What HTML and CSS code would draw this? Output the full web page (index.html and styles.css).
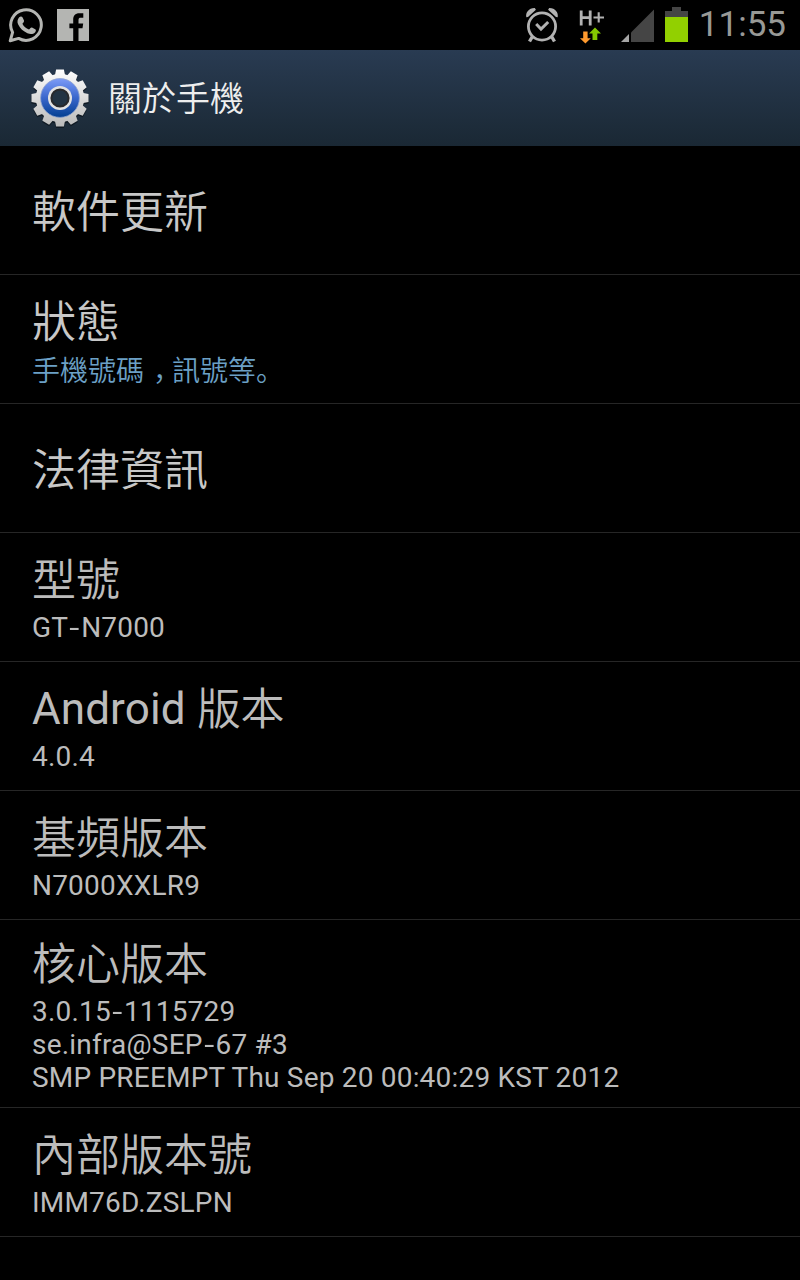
FILE: index.html
```html
<!DOCTYPE html>
<html lang="zh-Hant">
<head>
  <meta charset="UTF-8" />
  <meta name="viewport" content="width=device-width, initial-scale=1.0"/>
  <title>關於手機</title>
  <link rel="stylesheet" href="styles.css">
</head>
<body>

  <div class="status-bar">
    <svg class="icon-whatsapp" width="36" height="36" viewBox="0 0 36 36">
      <path d="M2.2 33.8 L4.6 25.4 A15.3 15.3 0 1 1 10.6 31.4 Z" fill="none" stroke="#b4b5b2" stroke-width="3" stroke-linejoin="round"/>
      <path d="M11.2 10.2 C12.3 9 14 9.2 14.6 10.4 L16 13.6 C16.4 14.8 15.2 15.8 14.4 16.8 C15.8 19.6 18 21.6 21 22.6 C22 21.6 22.8 20.2 24 20.6 L27.2 22.2 C28.3 22.8 28 24.4 27 25.4 C25 27.4 22.2 27.4 19.4 26.2 C15.4 24.6 12 21.4 10.2 17.6 C9 15 9.3 12.2 11.2 10.2 Z" fill="#b4b5b2"/>
    </svg>
    <svg class="icon-facebook" width="32" height="32" viewBox="0 0 32 32">
      <path d="M0 0 H32 V32 H21.5 V19.3 H25.5 L26.2 14.6 H21.5 V11 C21.5 9.4 22.2 8.8 23.8 8.8 H26.3 V4.3 H22.5 C18 4.3 16.2 6.8 16.2 10.6 V14.6 H12.4 V19.3 H16.2 V32 H0 Z" fill="#b4b5b2"/>
    </svg>

    <div class="status-right">
      <svg class="icon-alarm" width="34" height="36" viewBox="0 0 34 36">
        <g fill="none" stroke="#b2b2b2">
          <circle cx="17" cy="19.5" r="13.6" stroke-width="2.8"/>
          <path d="M11.2 17 L16 22 L23.2 15" stroke-width="3"/>
          <path d="M7.4 29.5 L4.5 34.5 M26.6 29.5 L29.5 34.5" stroke-width="3.4"/>
        </g>
        <path d="M1.3 10.3 C0.3 5.5 4 0.8 9.8 1 L10.9 2.7 L3 10 Z M32.7 10.3 C33.7 5.5 30 0.8 24.2 1 L23.1 2.7 L31 10 Z" fill="#b2b2b2"/>
      </svg>
      <svg class="icon-data" width="26" height="36" viewBox="0 0 26 36">
        <path d="M2.2 2.5 V17.5 M11.2 2.5 V17.5 M2 9.6 H11" fill="none" stroke="#b2b2b2" stroke-width="2.8"/>
        <path d="M14.5 9.5 H25 M19.7 4.3 V14.6" fill="none" stroke="#b2b2b2" stroke-width="2.1"/>
        <path d="M4.2 23.5 H8.6 V30.2 H11.8 L6.4 35.5 L1 30.2 H4.2 Z" fill="#ff9a2e"/>
        <path d="M13.5 32 H18.3 V25.6 H22 L16 19.5 L10 25.6 H13.5 Z" fill="#84c800"/>
      </svg>
      <svg class="icon-signal" width="34" height="33" viewBox="0 0 34 33">
        <path d="M10 23.5 L33 0.5 V33 H10 Z" fill="#454545"/>
        <path d="M0 33 L8 25 V33 Z" fill="#a5a5a5"/>
      </svg>
      <svg class="icon-battery" width="23" height="35" viewBox="0 0 23 35">
        <path d="M7 0 H16 V4 H23 V10 H0 V4 H7 Z" fill="#454545"/>
        <rect y="10" width="23" height="25" fill="#92d000"/>
      </svg>
      <span class="clock">11:55</span>
    </div>
  </div>

  <header>
    <svg class="icon-gear" width="60" height="62" viewBox="-30 -30 60 62">
      <defs>
        <linearGradient id="metal" gradientUnits="userSpaceOnUse" x1="0" y1="-29" x2="0" y2="29">
          <stop offset="0" stop-color="#ffffff"/>
          <stop offset="1" stop-color="#b9b9b9"/>
        </linearGradient>
        <linearGradient id="blue" x1="0" y1="0" x2="0" y2="1">
          <stop offset="0" stop-color="#7c9bf8"/>
          <stop offset="0.5" stop-color="#3966cb"/>
          <stop offset="1" stop-color="#033f91"/>
        </linearGradient>
        <path id="tooth" d="M-5.2 -22 L-3.9 -28.5 H3.9 L5.2 -22 Z"/>
        <g id="gear">
          <circle r="24.2"/>
          <use href="#tooth"/>
          <use href="#tooth" transform="rotate(30)"/>
          <use href="#tooth" transform="rotate(60)"/>
          <use href="#tooth" transform="rotate(90)"/>
          <use href="#tooth" transform="rotate(120)"/>
          <use href="#tooth" transform="rotate(150)"/>
          <use href="#tooth" transform="rotate(180)"/>
          <use href="#tooth" transform="rotate(210)"/>
          <use href="#tooth" transform="rotate(240)"/>
          <use href="#tooth" transform="rotate(270)"/>
          <use href="#tooth" transform="rotate(300)"/>
          <use href="#tooth" transform="rotate(330)"/>
        </g>
        <!-- teeth need one gradient across the whole gear, so they are used as a mask -->
        <mask id="gearMask" maskUnits="userSpaceOnUse" x="-30" y="-30" width="60" height="60">
          <use href="#gear" fill="#fff"/>
        </mask>
      </defs>
      <use class="gear-shadow" href="#gear" y="1.6"/>
      <rect x="-30" y="-30" width="60" height="60" fill="url(#metal)" mask="url(#gearMask)"/>
      <circle r="19.4" fill="url(#blue)" stroke="#8fa3cf" stroke-width="0.8"/>
      <circle r="12" fill="#e2e2e2"/>
      <circle r="8.6" fill="#223343" stroke="#28292c" stroke-width="2"/>
    </svg>
    <h1>關於手機</h1>
  </header>

  <ul class="settings">
    <li>
      <h2>軟件更新</h2>
    </li>
    <li>
      <h2>狀態</h2>
      <p class="link">手機號碼<span class="punct comma" lang="ja">，</span>訊號等<span class="punct" lang="ja">。</span></p>
    </li>
    <li>
      <h2>法律資訊</h2>
    </li>
    <li class="info">
      <h2>型號</h2>
      <p>GT<span class="dash">-</span>N7000</p>
    </li>
    <li class="info">
      <h2><span class="latin">Android </span>版本</h2>
      <p>4.0.4</p>
    </li>
    <li class="info">
      <h2>基頻版本</h2>
      <p>N7000XXLR9</p>
    </li>
    <li class="info tall">
      <h2>核心版本</h2>
      <p>3.0.15<span class="dash">-</span>1115729<br>se.infra@SEP<span class="dash">-</span>67 #3<br>SMP PREEMPT Thu Sep 20 00:40:29 KST 2012</p>
    </li>
    <li class="info">
      <h2>內部版本號</h2>
      <p>IMM76D.ZSLPN</p>
    </li>
  </ul>

</body>
</html>
```
FILE: styles.css
```css
* {
  box-sizing: border-box;
}

body {
  margin: 0;
  height: 1280px;
  overflow: hidden;
  background: #000;
  color: #c8c8c8;
  font-family: Roboto, "Noto Sans CJK TC", sans-serif;
}

svg {
  display: block;
  flex: none;
}

.status-bar {
  display: flex;
  align-items: flex-start;
  height: 50px;
  padding: 0 13px 0 8px;
}

.icon-whatsapp {
  margin-top: 7px;
}

.icon-facebook {
  margin: 9px 0 0 13px;
}

.status-right {
  display: flex;
  align-items: flex-start;
  margin-left: auto;
}

.icon-alarm {
  margin-top: 7px;
}

.icon-data {
  margin: 8px 0 0 20px;
}

.icon-signal {
  margin: 9px 0 0 16px;
}

.icon-battery {
  margin: 7px 0 0 10px;
}

.clock {
  width: 89px;
  margin-left: 10px;
  padding-right: 1px;
  font-size: 35px;
  line-height: 50px;
  color: #989996;
  text-align: right;
  white-space: nowrap;
}

header {
  display: flex;
  align-items: center;
  height: 96px;
  padding-left: 30px;
  background: linear-gradient(#293b52, #1a2834);
}

.icon-gear {
  margin-top: 2px;
}

.gear-shadow {
  fill: #0b1219;
  opacity: 0.7;
}

header h1 {
  margin: 2px 0 0 18px;
  font-size: 34px;
  font-weight: 350;
  line-height: 48px;
  color: #eee;
}

.settings {
  margin: 0;
  padding: 0;
  list-style: none;
}

.settings li {
  display: flex;
  flex-direction: column;
  justify-content: center;
  height: 129px;
  padding: 4px 32px 0;
  border-bottom: 1px solid #262626;
}

.settings li.tall {
  height: 188px;
  padding-top: 6px;
}

.settings h2 {
  margin: 0;
  font-size: 44px;
  font-weight: 350;
  line-height: 52px;
}

.settings h2:only-child {
  margin-top: 2px;
}

.settings h2 .latin {
  position: relative;
  top: -1px;
  font-weight: 400;
  letter-spacing: 0.1px;
}

.settings p {
  margin: 4px 0 0;
  font-size: 28px;
  line-height: 33px;
  letter-spacing: 0.2px;
}

.settings .dash {
  display: inline-block;
  padding: 0 2.5px;
  transform: scaleX(1.3);
}

.settings .info {
  color: #bcbcbc;
}

.settings .link {
  font-family: "Noto Sans CJK TC", sans-serif;
  font-weight: 350;
  color: #6ca0c6;
  letter-spacing: 0;
}

.link .punct {
  display: inline-block;
  width: 28px;
  font-family: "Noto Sans CJK JP", sans-serif;
  font-feature-settings: "halt";
}

/* keeps the comma in the middle of its cell */
.link .comma {
  padding-left: 9px;
}
```
